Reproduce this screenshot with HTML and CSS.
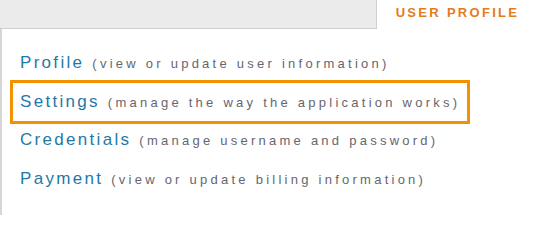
FILE: index.html
```html
<!DOCTYPE html>
<html>
<head>
<meta charset="utf-8">
<link rel="stylesheet" href="styles.css">
</head>
<body>
<div class="tabs">
  <div class="tab-spacer"></div>
  <div class="tab active">USER PROFILE</div>
</div>
<div class="panel">
  <ul class="menu">
    <li class="item"><span class="title">Profile</span><span class="desc">(view or update user information)</span></li>
    <li class="item selected"><span class="title">Settings</span><span class="desc">(manage the way the application works)</span></li>
    <li class="item"><span class="title">Credentials</span><span class="desc">(manage username and password)</span></li>
    <li class="item"><span class="title">Payment</span><span class="desc">(view or update billing information)</span></li>
  </ul>
</div>
</body>
</html>
```

FILE: styles.css
```css
html, body {
  margin: 0;
  padding: 0;
  background: #ffffff;
  font-family: "Liberation Sans", Arial, sans-serif;
}

.tabs {
  display: flex;
  height: 29px;
}

.tab-spacer {
  flex: 0 0 377px;
  box-sizing: border-box;
  background: #ebebeb;
  border-bottom: 1px solid #cfcfcf;
  border-right: 1px solid #cfcfcf;
}

.tab {
  flex: 1;
  text-align: center;
  font-size: 13px;
  font-weight: bold;
  line-height: 15px;
  padding-top: 5px;
  letter-spacing: 2.3px;
  color: #e37b1f;
}

.panel {
  height: 186px;
  box-sizing: border-box;
  border-left: 2px solid #d6d6d6;
  padding-top: 15px;
}

.menu {
  list-style: none;
  margin: 0 0 0 11px;
  padding: 0;
  display: flex;
  flex-direction: column;
  align-items: flex-start;
}

.item {
  line-height: 37.5px;
  padding: 0 7px 0 7px;
  white-space: nowrap;
}

.item.selected {
  outline: 3px solid #f39200;
}

.title {
  font-size: 17px;
  letter-spacing: 2.3px;
  color: #1f78a8;
}

.desc {
  font-size: 13px;
  letter-spacing: 3.25px;
  color: #66666e;
  margin-left: 8px;
}
```
